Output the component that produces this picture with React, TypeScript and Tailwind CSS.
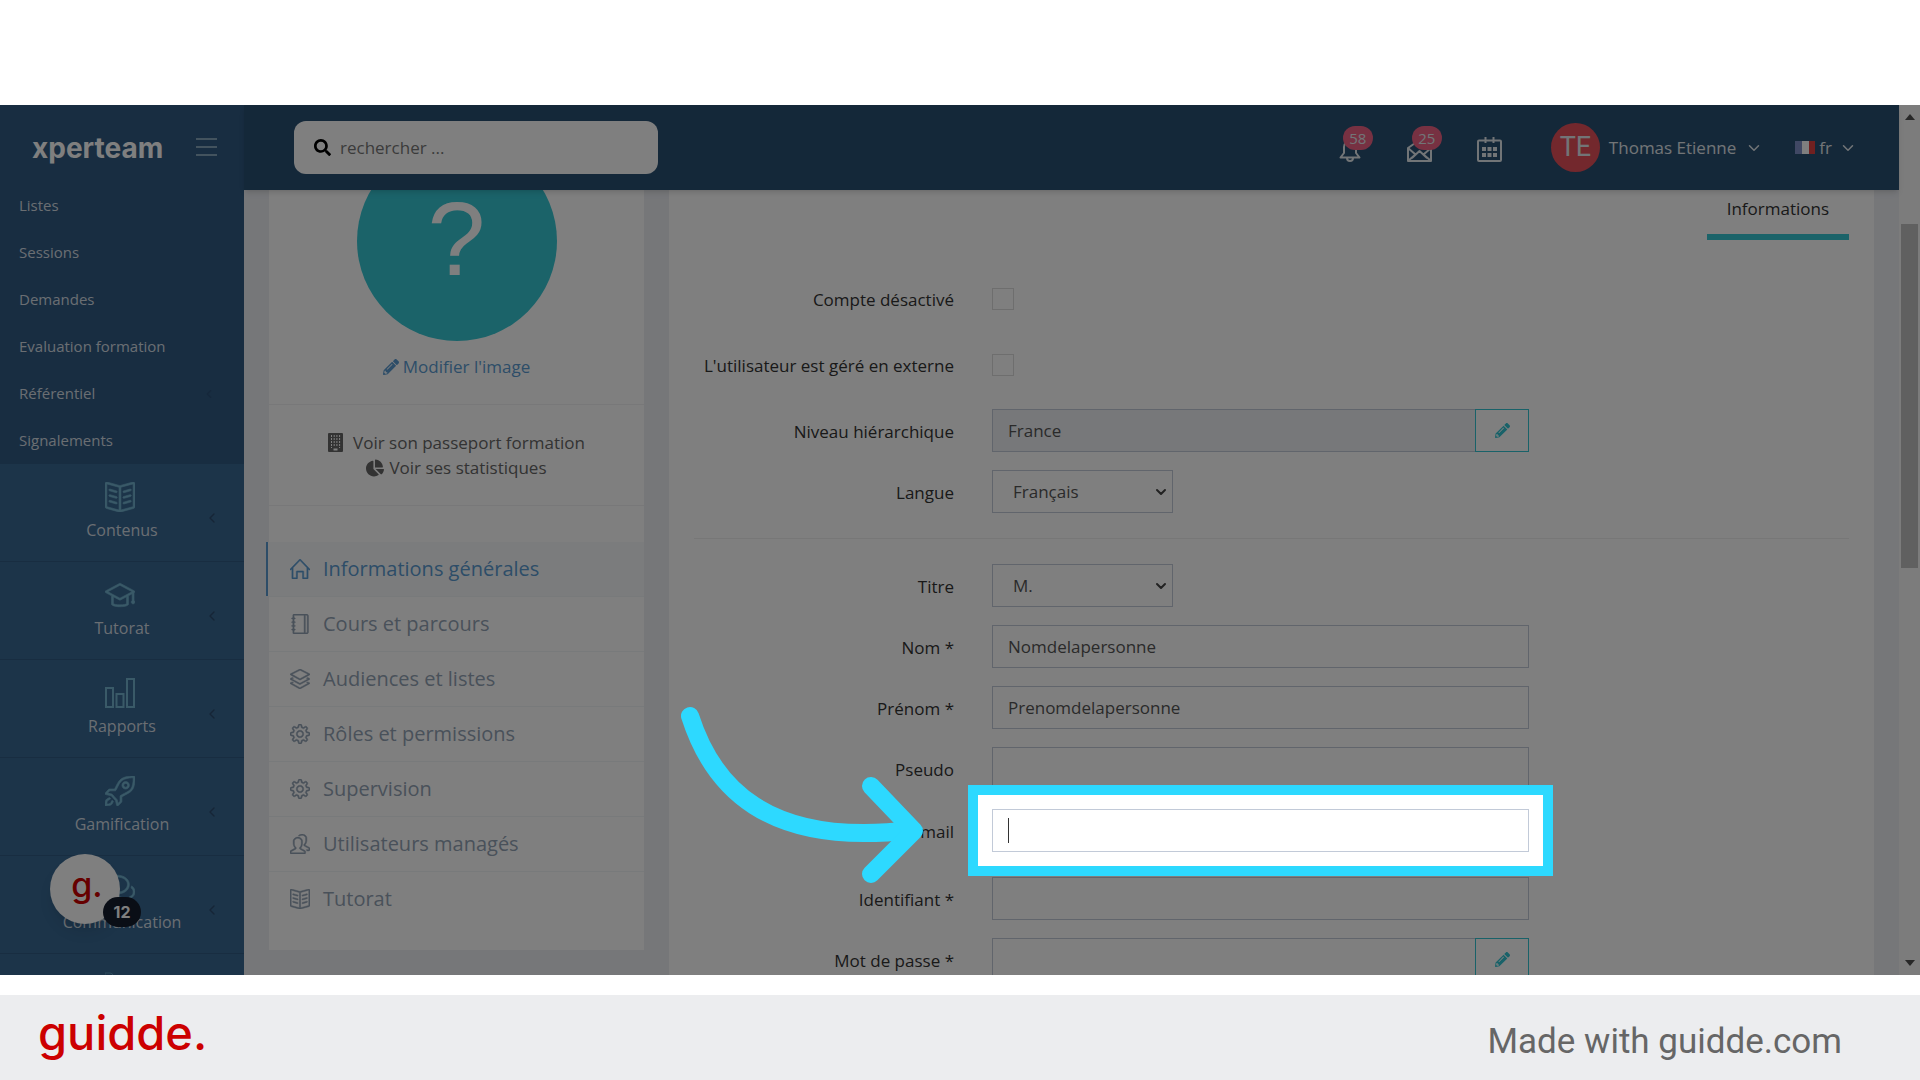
import React from 'react';
import clsx from 'clsx';
import { ChevronDown, ChevronLeft } from 'lucide-react';
import { FaChartPie, FaPencilAlt, FaSearch } from 'react-icons/fa';
import {
    SlBookOpen,
    SlBubbles,
    SlGraduation,
    SlHome,
    SlLayers,
    SlNotebook,
    SlPeople,
    SlRocket,
    SlSettings,
} from 'react-icons/sl';

const subLinks = ['Listes', 'Sessions', 'Demandes', 'Evaluation formation', 'Référentiel', 'Signalements'];

function BarsIcon({ size = 30 }: { size?: number }) {
    return (
        <svg width={size} height={size} viewBox="0 0 30 30" fill="none" stroke="currentColor" strokeWidth="2">
            <rect x="1" y="10" width="7" height="19" />
            <rect x="11.5" y="16" width="7" height="13" />
            <rect x="22" y="1" width="7" height="28" />
        </svg>
    );
}

function ToolsIcon({ size = 30 }: { size?: number }) {
    return (
        <svg width={size} height={size} viewBox="0 0 30 30" fill="none" stroke="currentColor" strokeWidth="2">
            <path d="M0 1h5a3 3 0 0 1 3 3v4l20 20M0 1v6l4 3h4" />
        </svg>
    );
}

function BellIcon() {
    return (
        <svg width="22" height="24" viewBox="0 0 22 24" fill="none" stroke="currentColor" strokeWidth="2" strokeLinejoin="round">
            <path d="M1.500 19.500L5 15V9a6 6 0 0 1 12 0V15L20.500 19.500Z" />
            <path d="M8 20a3 3 0 0 0 6 0" />
        </svg>
    );
}

function MailIcon() {
    return (
        <svg width="25" height="24" viewBox="0 0 25 24" fill="none" stroke="currentColor" strokeWidth="2" strokeLinejoin="round">
            <path d="M1 10V23H24V10L12.500 2Z" />
            <path d="M1 10L8.500 16.500L1.500 22.500M24 10L16.500 16.500L23.500 22.500M5 20L12.500 13L20 20" />
        </svg>
    );
}

function CalendarIcon() {
    return (
        <svg width="25" height="25" viewBox="0 0 25 25" fill="none" stroke="currentColor" strokeWidth="2">
            <rect x="1" y="3.500" width="23" height="20.500" rx="1" />
            <path d="M8.500 0V6M16.500 0V6" />
            <path d="M5 12H20M5 18H20" strokeWidth="4" strokeDasharray="4 1.500" />
        </svg>
    );
}

function BuildingIcon() {
    return (
        <svg width="15" height="19" viewBox="0 0 15 19" fill="currentColor">
            <path fillRule="evenodd" d="M1 0H14a1 1 0 0 1 1 1V18a1 1 0 0 1-1 1H1a1 1 0 0 1-1-1V1a1 1 0 0 1 1-1ZM5.500 15.500V17.500H9.500V15.500Z" />
            <path d="M3.500 2V15M6.200 2V13.500M8.900 2V13.500M11.600 2V15" stroke="#fff" strokeWidth="1" strokeDasharray="2 1" />
        </svg>
    );
}

const modules = [
    { label: 'Contenus', icon: SlBookOpen },
    { label: 'Tutorat', icon: SlGraduation },
    { label: 'Rapports', icon: BarsIcon },
    { label: 'Gamification', icon: SlRocket },
    { label: 'Communication', icon: SlBubbles },
    { label: '', icon: ToolsIcon },
];

const profileMenu = [
    { label: 'Informations générales', icon: SlHome, active: true },
    { label: 'Cours et parcours', icon: SlNotebook },
    { label: 'Audiences et listes', icon: SlLayers },
    { label: 'Rôles et permissions', icon: SlSettings },
    { label: 'Supervision', icon: SlSettings },
    { label: 'Utilisateurs managés', icon: SlPeople },
    { label: 'Tutorat', icon: SlBookOpen },
];

function Sidebar() {
    return (
        <aside className="w-[244px] shrink-0 bg-[#386892] text-[#d5dde5]">
            <div className="bg-[#305a82]">
                <div className="h-[77px] flex items-center justify-between pt-2 pl-8 pr-[27px]">
                    <span className="font-[Inter,sans-serif] font-bold text-[28px] leading-8 text-white">xperteam</span>
                    <button aria-label="Menu" className="flex flex-col gap-[6px] pb-[2px]">
                        <span className="block w-[21px] h-[2px] bg-[#86a6bd]" />
                        <span className="block w-[21px] h-[2px] bg-[#86a6bd]" />
                        <span className="block w-[21px] h-[2px] bg-[#86a6bd]" />
                    </button>
                </div>
                <ul>
                    {subLinks.map((label) => (
                        <li key={label}>
                            <a href="#" className="flex items-center justify-between h-[47px] pl-[19px] pr-7 text-[15px]">
                                {label}
                                {label === 'Référentiel' && <ChevronLeft size={14} className="text-[#2b4f76]" />}
                            </a>
                        </li>
                    ))}
                </ul>
            </div>
            <ul className="[&_path]:stroke-current">
                {modules.map(({ label, icon: Icon }) => (
                    <li key={label} className="border-b border-[#305a82]">
                        <a href="#" className="relative flex flex-col items-center h-[97px] pt-[18px] gap-[6px] text-base">
                            <span className="text-[#74b4d0] mr-1 [&_path]:[stroke-width:2%]"><Icon size={30} /></span>
                            <span className="leading-6">{label}</span>
                            <ChevronLeft size={16} className="absolute right-6 top-[46px] text-[#2c4a6c]" />
                        </a>
                    </li>
                ))}
            </ul>
        </aside>
    );
}

function TopBar() {
    return (
        <header className="relative z-10 h-[85px] bg-[#285072] text-[#e4eaef] shadow-md flex items-center justify-between pl-[50px] pr-[42px]">
            <label className="w-[364px] h-[53px] rounded-xl bg-white flex items-center gap-[9px] px-5">
                <FaSearch size={17} className="text-black" />
                <input type="search" placeholder="rechercher ..." aria-label="rechercher" className="flex-1 min-w-0 text-[17px] text-[#555] placeholder:text-[#777] outline-none" />
            </label>
            <div className="flex items-center">
                <button aria-label="Notifications" className="relative mr-[46px] pt-1">
                    <BellIcon />
                    <span className="absolute left-[4px] -top-2 w-[30px] h-6 rounded-full bg-[#ee6284] text-[15px] leading-6 text-center">58</span>
                </button>
                <button aria-label="Messages" className="relative mr-[45px] pt-1">
                    <MailIcon />
                    <span className="absolute left-[5px] -top-2 w-[30px] h-6 rounded-full bg-[#ee6284] text-[15px] leading-6 text-center">25</span>
                </button>
                <button aria-label="Calendrier" className="mr-[49px] pt-1">
                    <CalendarIcon />
                </button>
                <button className="flex items-center text-[17px]">
                    <span className="size-[49px] rounded-full bg-[#e7505a] flex items-center justify-center text-[27px] font-[Roboto,sans-serif] mr-[9px]">TE</span>
                    Thomas Etienne
                    <ChevronDown size={18} className="ml-[9px]" />
                </button>
                <button className="flex items-center text-[17px] ml-8">
                    <span className="flex w-5 h-[13px] mr-1">
                        <span className="flex-1 bg-[#8090c8]" />
                        <span className="flex-1 bg-white" />
                        <span className="flex-1 bg-[#e04040]" />
                    </span>
                    fr
                    <ChevronDown size={18} className="ml-[7px]" />
                </button>
            </div>
        </header>
    );
}

function ProfileCard() {
    return (
        <section className="w-[375px] shrink-0 self-start bg-white pt-5 pb-6">
            <div className="flex flex-col items-center pb-[25px] border-b border-[#f0f0f3]">
                <div className="size-[200px] rounded-full bg-[#36c6d3] flex items-center justify-center pb-1 text-white text-[104px] font-['Liberation_Sans',sans-serif]">?</div>
                <a href="#" className="flex items-center gap-1 mt-[14px] text-[17px] leading-6 text-[#5b9bd1]">
                    <FaPencilAlt size={16} /> Modifier l'image
                </a>
            </div>
            <div className="flex flex-col items-center py-[25px] border-b border-[#f0f0f3] text-[17px] leading-[25px] text-[#666]">
                <a href="#" className="flex items-center gap-[10px]"><BuildingIcon /> Voir son passeport formation</a>
                <a href="#" className="flex items-center gap-[5px]"><FaChartPie size={18} /> Voir ses statistiques</a>
            </div>
            <ul className="mt-9">
                {profileMenu.map(({ label, icon: Icon, active }) => (
                    <li key={label} className="border-b border-[#f0f4f7] last:border-b-0">
                        <a
                            href="#"
                            className={clsx(
                                'flex items-center gap-[13px] h-[54px] text-[20px]',
                                active ? '-ml-[3px] pl-[22px] border-l-2 border-[#5b9bd1] bg-[#f6f9fb] text-[#5b9bd1]' : 'pl-[21px] text-[#93a3b5]',
                            )}
                        >
                            <Icon size={20} stroke="currentColor" strokeWidth={24} /> {label}
                        </a>
                    </li>
                ))}
            </ul>
        </section>
    );
}

// white field box shared by all text inputs and selects of the form
const box = 'w-full h-[43px] border border-[#c2cad8] text-[17px] text-[#555] outline-none';

function Row({ id, label, className, children }: { id: string; label: string; className?: string; children: React.ReactNode }) {
    return (
        <div className={clsx('grid grid-cols-[260px_minmax(0,537px)] gap-x-[38px] items-center', className ?? 'mb-[18px]')}>
            <label htmlFor={id} className="pt-[2px] text-right text-[17px] leading-6 text-[#333]">{label}</label>
            {children}
        </div>
    );
}

function Select({ id, options }: { id: string; options: string[] }) {
    return (
        <div className="relative w-[181px]">
            <select id={id} className={clsx(box, 'appearance-none bg-white pl-5')}>
                {options.map((o) => <option key={o}>{o}</option>)}
            </select>
            <ChevronDown size={16} strokeWidth={3} className="absolute right-1 top-[14px] text-[#444] pointer-events-none" />
        </div>
    );
}

function EditButton({ label }: { label: string }) {
    return (
        <button aria-label={label} className="w-[54px] h-[43px] shrink-0 border border-[#32c5d2] text-[#32c5d2] flex items-center justify-center">
            <FaPencilAlt size={15} />
        </button>
    );
}

// frame and arrow over the current field; the huge shadow dims the rest of the screen
function Spotlight() {
    return (
        <>
            <div className="absolute -inset-[24px] z-40 border-[10px] border-[#2dd9ff] shadow-[0_0_0_3000px_rgba(0,0,0,0.5)] pointer-events-none" />
            <svg className="absolute -left-[312px] -top-[104px] z-50 pointer-events-none" width="245" height="182" viewBox="680 705 245 182" fill="none" stroke="#2dd9ff" strokeWidth="18" strokeLinecap="round" strokeLinejoin="round">
                <path d="M690 716C712 785 765 848 912 830" />
                <path d="M871 786L914 831L871 874" />
            </svg>
        </>
    );
}

function UserForm() {
    return (
        <section className="flex-1 min-w-0 bg-white px-[25px]">
            <div className="flex justify-end pt-[76px]">
                <button className="px-5 pb-[13px] border-b-[6px] border-[#36c6d3] text-[17px] leading-6 text-[#333]">Informations</button>
            </div>
            <form className="pt-[37px]">
                <Row id="disabled" label="Compte désactivé" className="h-[43px] mb-[23px]">
                    <input id="disabled" type="checkbox" className="appearance-none size-[22px] border border-[#dcdcdc] bg-white" />
                </Row>
                <Row id="external" label="L'utilisateur est géré en externe" className="h-[43px] mb-[23px]">
                    <input id="external" type="checkbox" className="appearance-none size-[22px] border border-[#dcdcdc] bg-white" />
                </Row>
                <Row id="level" label="Niveau hiérarchique">
                    <div className="flex">
                        <input id="level" readOnly defaultValue="France" className={clsx(box, 'flex-1 border-r-0 bg-[#eef1f5] px-[15px]')} />
                        <EditButton label="Modifier le niveau" />
                    </div>
                </Row>
                <Row id="lang" label="Langue" className="mb-[25px]">
                    <Select id="lang" options={['Français', 'English']} />
                </Row>
                <hr className="mb-[25px] border-[#eee]" />
                <Row id="title" label="Titre">
                    <Select id="title" options={['M.', 'Mme']} />
                </Row>
                <Row id="lastname" label="Nom *">
                    <input id="lastname" defaultValue="Nomdelapersonne" className={clsx(box, 'px-[15px]')} />
                </Row>
                <Row id="firstname" label="Prénom *">
                    <input id="firstname" defaultValue="Prenomdelapersonne" className={clsx(box, 'px-[15px]')} />
                </Row>
                <Row id="nickname" label="Pseudo" className="mb-[19px]">
                    <input id="nickname" className={clsx(box, 'px-[15px]')} />
                </Row>
                <Row id="email" label="Email" className="mb-[25px]">
                    <div className="relative">
                        <input id="email" type="email" className={clsx(box, 'px-[15px]')} />
                        <span className="absolute left-4 top-[9px] w-px h-[25px] bg-[#333]" />
                        <Spotlight />
                    </div>
                </Row>
                <Row id="login" label="Identifiant *">
                    <input id="login" className={clsx(box, 'px-[15px]')} />
                </Row>
                <Row id="password" label="Mot de passe *">
                    <div className="flex">
                        <input id="password" type="password" className={clsx(box, 'flex-1 border-r-0 px-[15px]')} />
                        <EditButton label="Modifier le mot de passe" />
                    </div>
                </Row>
            </form>
        </section>
    );
}

function Scrollbar() {
    return (
        <div className="w-[21px] shrink-0 bg-[#f8f8f8] flex flex-col items-center justify-between py-[9px]">
            <span className="border-x-[5px] border-x-transparent border-b-[6px] border-b-[#505050]" />
            <span className="w-[17px] h-[344px] bg-[#c1c1c1] mt-[104px] mb-auto" />
            <span className="border-x-[5px] border-x-transparent border-t-[6px] border-t-[#505050]" />
        </div>
    );
}

export default function App() {
    return (
        <div className="h-screen flex flex-col bg-white pt-[105px] font-['Open_Sans','Noto_Sans',sans-serif]">
            <div className="relative flex-1 min-h-0 flex overflow-hidden">
                <Sidebar />
                <div className="flex-1 min-w-0 bg-[#eceef3]">
                    <TopBar />
                    {/* the page is scrolled a little under the top bar */}
                    <main className="flex gap-[25px] px-[25px] -mt-[69px]">
                        <ProfileCard />
                        <UserForm />
                    </main>
                </div>
                <Scrollbar />
                <button aria-label="guidde" className="absolute left-[50px] bottom-[51px] size-[70px] rounded-full bg-white shadow-lg">
                    <span className="block pb-2 pl-1 font-[Inter,sans-serif] font-medium text-[34px] leading-8 text-[#cc0000]">g.</span>
                    <span className="absolute left-[53px] top-[43px] w-[38px] h-[30px] rounded-full bg-[#141c2c] text-white text-base leading-[30px] font-bold font-[Inter,sans-serif]">12</span>
                </button>
            </div>
            <footer className="mt-5 h-[85px] shrink-0 bg-[#ecedef] flex items-center justify-between pl-[38px] pr-[78px]">
                <span className="pb-[10px] font-[Inter,sans-serif] font-medium text-[47px] leading-[56px] text-[#cc0000]">guidde.</span>
                <span className="pt-2 font-[Roboto,sans-serif] text-[35px] leading-10 text-[#666]">Made with guidde.com</span>
            </footer>
        </div>
    );
}
